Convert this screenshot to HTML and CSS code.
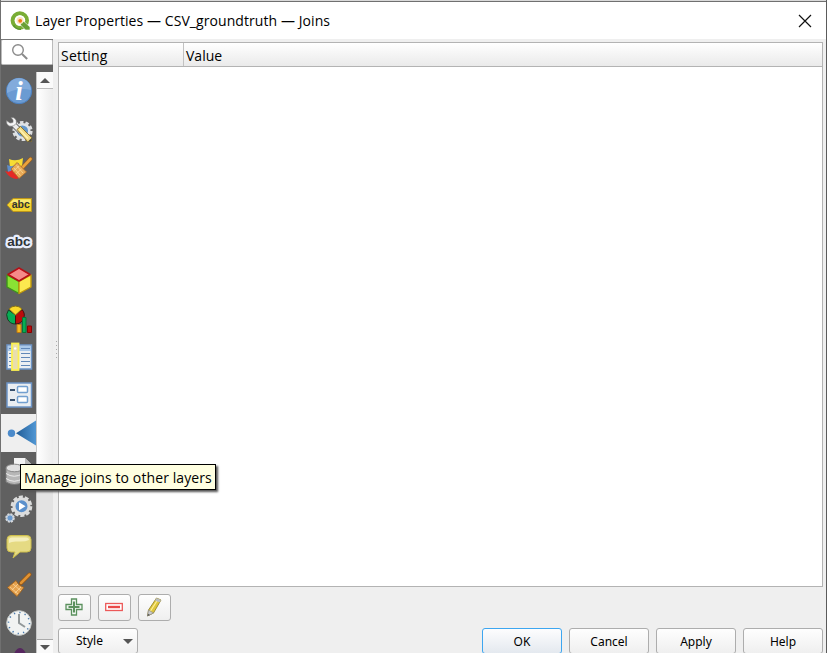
FILE: index.html
```html
<!DOCTYPE html>
<html lang="en">
<head>
<meta charset="utf-8">
<title>Layer Properties — CSV_groundtruth — Joins</title>
<link rel="stylesheet" href="styles.css">
</head>
<body>
<div class="window">
  <header class="titlebar">
    <svg class="logo" width="20" height="20" viewBox="0 0 20 20"><circle cx="9.800" cy="9.500" r="7.200" fill="none" stroke="#79ad35" stroke-width="4"/><path d="M3.500 14A8 8 0 0 0 11 18.300" fill="none" stroke="#589632" stroke-width="1.500"/><circle cx="10" cy="9.500" r="5.200" fill="#fff"/><path d="M10.500 10.500H14L20 16V19H15.500L10.500 14Z" fill="#689f35" stroke="#fff" stroke-width=".6"/><circle cx="10" cy="9.500" r="3.500" fill="#fce3bd"/><circle cx="10.200" cy="9.800" r="1.900" fill="#ee7913"/></svg>
    <h1 class="title">Layer Properties — CSV_groundtruth — Joins</h1>
    <svg class="close" width="14" height="14" viewBox="0 0 14 14"><path d="M1 1L13 13M13 1L1 13" stroke="#111" stroke-width="1.200"/></svg>
  </header>
  <div class="body">
    <aside class="sidebar">
      <div class="search"><svg width="18" height="18" viewBox="0 0 18 18" fill="none" stroke="#8b8b8b"><circle cx="7" cy="7" r="5.300" stroke-width="1.400"/><path d="M11 11L16.200 16" stroke-width="2"/></svg></div>
      <div class="side-main">
        <nav class="icons">
          <svg class="row" viewBox="0 0 36 38"><circle cx="18" cy="19" r="12.700" fill="#6b9bd2" stroke="#4b80c0"/><path d="M6 18A12 12 0 0 1 30 18Q18 15 6 21Z" fill="#82abdc"/><text x="18" y="27.500" class="info">i</text></svg>
          <svg class="row" viewBox="0 0 36 38"><circle cx="21.500" cy="21" r="8.600" fill="none" stroke="#dcdee0" stroke-width="3" stroke-dasharray="3.400 2"/><circle cx="21.500" cy="21" r="6.800" fill="#6598cc" stroke="#dfe3e6" stroke-width="2.500"/><path d="M12 14L20 22" stroke="#606060" stroke-width="6"/><path d="M11 13L20 22" stroke="#ececec" stroke-width="4"/><path d="M10 7.500Q15.500 7 15.500 13Q13 17 8 16Q5 14 5.500 10.500L9 13L12 12.500L12 10Z" fill="#f6f6f6" stroke="#777" stroke-width=".6"/><path d="M16 19.500L19.500 16.500L30.500 27.500V31.500H26.500Z" fill="#f0da84" stroke="#8d762f"/><path d="M18.500 19.500L27 28.500" stroke="#fff3b0" stroke-width="1.500"/><path d="M27 31.500L30.500 28V31.500Z" fill="#444"/></svg>
          <svg class="row" viewBox="0 0 36 38"><path d="M8 11Q15 14 22 10L21 19L9 19Z" fill="#f7dc34"/><path d="M6 17Q12 20 18 15L17 24L7 24Z" fill="#5e8dca"/><path d="M4 23Q9 25 12 21L19 29L16 31Q9 31 4 23Z" fill="#e52a26"/><path d="M21 20L29.500 11" stroke="#9e5d16" stroke-width="4" stroke-linecap="round"/><path d="M21 20L29.500 11" stroke="#e9a33e" stroke-width="2.600" stroke-linecap="round"/><path d="M16 14.500L25.500 24L18 30.500L10 21Z" fill="#e8aa58" stroke="#a96a25" stroke-width=".8"/><path d="M13 20L19.500 27.500M15.500 17.500L22 25M12.500 23L18 18M15 26L20.500 21" stroke="#fbdc99" stroke-width=".8"/></svg>
          <svg class="row" viewBox="0 0 36 38"><path d="M6 19L12 12.500H30.500V25.500H12Z" fill="#f2d331" stroke="#bd961a"/><path d="M9 17L12.500 13.500H29.500V17Z" fill="#faea72"/><text x="19.800" y="22" class="tag">abc</text></svg>
          <svg class="row" viewBox="0 0 36 38"><text x="18" y="22.300" class="halo">abc</text></svg>
          <svg class="row" viewBox="0 0 36 38" stroke-linejoin="round"><path d="M6 13L18 19.500V31.500L6 25Z" fill="#8ae234" stroke="#3d951b" stroke-width="1.400"/><path d="M18 19.500L30 13V25L18 31.500Z" fill="#fce94f" stroke="#c29a0a" stroke-width="1.400"/><path d="M18 6L29 12.500L18 19L7 12.500Z" fill="#f58a8a" stroke="#b50f16" stroke-width="1.500"/></svg>
          <svg class="row" viewBox="0 0 36 38"><path d="M14.500 15V24A8.700 8.700 0 0 1 7.500 10Z" fill="#06ad55" stroke="#173f24"/><path d="M14.500 15L21 9.500A8.700 8.700 0 0 1 14.500 24Z" fill="#bb0c0c" stroke="#441010"/><path d="M14.500 15L8 9A8.700 8.700 0 0 1 21 9Z" fill="#fbd92b" stroke="#8a7418"/><path d="M16 24.500H20V32.500H16Z" fill="#f6bb22" stroke="#c07a11"/><path d="M21.500 17.500H25V32.500H21.500Z" fill="#06ad55" stroke="#087338"/><path d="M26.500 26H30.500V32.500H26.500Z" fill="#bb0c0c" stroke="#800"/></svg>
          <svg class="row" viewBox="0 0 36 38"><rect x="6" y="7" width="24.500" height="24" fill="#eceff2" stroke="#6c94c6" stroke-width="1.500"/><path d="M7 8H30V13H7Z" fill="#aac8e8"/><path d="M8 10.500H29M8 15.500H29M8 19.500H29M8 23.500H29M8 27.500H29" stroke="#6288b8" stroke-width="1.100" stroke-dasharray="10 2"/><rect x="11" y="5.500" width="6.500" height="26.500" fill="#e9dfac" stroke="#fcf151" stroke-width="1.800"/><circle cx="14.200" cy="10.500" r="1.300" fill="#fff"/></svg>
          <svg class="row" viewBox="0 0 36 38"><rect x="6" y="7" width="24.500" height="24" fill="#e9edf1" stroke="#6c94c6" stroke-width="1.500"/><g fill="#fff" stroke="#729fcf" stroke-width="1.500"><rect x="16.500" y="10.500" width="10" height="6" rx="1"/><rect x="16.500" y="20.500" width="10" height="6" rx="1"/></g><path d="M9 14H14M9 24H14" stroke="#38506d" stroke-width="2"/></svg>
          <svg class="row active" viewBox="0 0 36 38"><defs><linearGradient id="j"><stop stop-color="#205c96"/><stop offset="1" stop-color="#5197d4"/></linearGradient></defs><circle cx="10.500" cy="19.200" r="3.700" fill="#4b8aca"/><path d="M15 19.200L35 6.500V31.500Z" fill="url(#j)"/></svg>
          <svg class="row" viewBox="0 0 36 38"><path d="M13 6H24L30 12V30H13Z" fill="#f4f4f4"/><path d="M24 6V12H30" fill="#bbb"/><path d="M5 16V30Q13 35 22 30V16Z" fill="#b7b7b7" stroke="#777"/><ellipse cx="13.500" cy="16" rx="8.500" ry="3.800" fill="#e0e0e0" stroke="#888"/><path d="M5 21.500Q13 27 22 21.500M5 26.500Q13 32 22 26.500" fill="none" stroke="#eee"/></svg>
          <svg class="row" viewBox="0 0 36 38"><circle cx="20.500" cy="16.300" r="9.300" fill="none" stroke="#dcdddd" stroke-width="3" stroke-dasharray="4 1.843"/><circle cx="20.500" cy="16.300" r="7.500" fill="#5a90cc" stroke="#dcdddd" stroke-width="3"/><path d="M18 12.300L24.500 16.300L18 20.300Z" fill="#fff"/><circle cx="9" cy="28" r="3.800" fill="#699ad0" stroke="#d7dadd" stroke-width="2" stroke-dasharray="2 .98"/><circle cx="9" cy="28" r="3.200" fill="#699ad0" stroke="#d7dadd"/></svg>
          <svg class="row" viewBox="0 0 36 38"><path d="M10 7.500H26Q30 7.500 30 11.500V20Q30 24 26 24H19L12 30L14 24H10Q6 24 6 20V11.500Q6 7.500 10 7.500Z" fill="#e5da83" stroke="#cdbe4b"/><path d="M8 15V12Q8 9.500 11 9.500H25Q28 9.500 28 12Q24 14 17 13.500Q11 13 8 15Z" fill="#f5efbd"/></svg>
          <svg class="row" viewBox="0 0 36 38"><path d="M20 17L28.500 8.500" stroke="#945414" stroke-width="4" stroke-linecap="round"/><path d="M20 17L28.500 8.500" stroke="#df9334" stroke-width="2.500" stroke-linecap="round"/><path d="M15 14.500Q17 19.500 23 21.500L16 30.500L6.500 21.500Z" fill="#e5a14e" stroke="#9c5d18" stroke-width=".8"/><path d="M12 18L20 25M9 21L17 28M11 24L17 18M14 27L20 21" stroke="#fbd59a" stroke-width=".8"/></svg>
          <svg class="row" viewBox="0 0 36 38"><circle cx="18" cy="19" r="12.300" fill="#f1f3f2" stroke="#c6cac8"/><circle cx="18" cy="19" r="10.500" fill="none" stroke="#4979ac" stroke-width="1.500" stroke-dasharray="1.300 4.198"/><path d="M18 10V19L24 23" fill="none" stroke="#929899" stroke-width="2"/></svg>
          <svg class="row" viewBox="0 0 36 38"><ellipse cx="19" cy="19" rx="7" ry="13" fill="#56265f"/></svg>
        </nav>
        <div class="scroll"><div class="arrow"><i class="up"></i></div><div class="thumb"></div><div class="arrow last"><i class="down"></i></div></div>
      </div>
    </aside>
    <div class="splitter"><i></i><i></i><i></i><i></i><i></i></div>
    <main class="content">
      <div class="tree"><div class="tree-head"><div class="setting"><span>Setting</span></div><div class="value"><span>Value</span></div></div></div>
      <div class="tools">
        <button class="btn tool"><svg width="18" height="18" viewBox="0 0 18 18"><path d="M6.500 1H11.500V6.500H17V11.500H11.500V17H6.500V11.500H1V6.500H6.500Z" fill="#f3f7f3" stroke="#5b915e" stroke-width="1.300"/><path d="M9 3.500V14.500M3.500 9H14.500" stroke="#5b915e" stroke-width="2"/></svg></button>
        <button class="btn tool"><svg width="18" height="18" viewBox="0 0 18 18"><rect x=".7" y="5.500" width="16.600" height="7" fill="#fff" stroke="#ec5959" stroke-width="1.300"/><path d="M3 9H15" stroke="#e94949" stroke-width="2.400"/></svg></button>
        <button class="btn tool"><svg width="18" height="20" viewBox="0 0 18 20"><path d="M11.500 1L16 3L8.500 16L2.500 19L3.500 13Z" fill="#dfc73c" stroke="#8e7c26" stroke-width=".8"/><path d="M5.500 14L12.500 3" stroke="#fff09b" stroke-width="1.200"/><path d="M11.500 1L16 3L14.500 5.500L10 3.500Z" fill="#b9bdc0"/><path d="M3.500 13L8.500 16L2.500 19Z" fill="#c9c9cc" stroke="#888" stroke-width=".6"/><path d="M2.500 19L3 16.800L5 18Z" fill="#555"/></svg></button>
      </div>
      <div class="actions">
        <button class="btn style"><span>Style</span><i class="down"></i></button>
        <button class="btn ok">OK</button><button class="btn">Cancel</button><button class="btn">Apply</button><button class="btn">Help</button>
      </div>
    </main>
  </div>
  <div class="tooltip"><span>Manage joins to other layers</span></div>
</div>
</body>
</html>
```

FILE: styles.css
```css
* { box-sizing: border-box; }
body { margin: 0; overflow: hidden; background: #d9d9d9; font-family: "Open Sans", "Noto Sans", sans-serif; color: #000; }
svg { display: block; flex: none; }
.window { position: relative; height: 653px; padding-top: 1px; display: flex; flex-direction: column; }
.window { border-left: 1px solid #707070; border-right: 1px solid #5b5b5b; }
.titlebar { height: 38px; flex: none; background: #fff; border-top: 1px solid #707070; display: flex; align-items: center; padding: 0 14px 0 9px; }
.title { margin: 0 0 0 5px; font-size: 14px; font-weight: 400; letter-spacing: .075px; white-space: nowrap; }
.close { margin-left: auto; }
.body { flex: 1; min-height: 0; display: flex; background: #efefef; }
.sidebar { width: 52px; flex: none; display: flex; flex-direction: column; background: #606060; }
.search { height: 26px; flex: none; background: #fff; border: 1px solid #bbb; border-top-color: #777; border-radius: 2px; padding: 3px 0 0 9px; }
.side-main { flex: 1; min-height: 0; display: flex; padding-top: 7px; }
.icons { width: 35px; overflow: hidden; }
.row { width: 36px; height: 38px; }
.active { background: #efefef; }
.info { font: italic bold 27px "Liberation Serif", serif; fill: #fff; text-anchor: middle; }
.tag { font: bold 10.500px "Liberation Sans", sans-serif; fill: #333; text-anchor: middle; }
.halo { font: bold 13.500px "Liberation Sans", sans-serif; fill: #2e3436; stroke: #e8edfb; stroke-width: 4.500px; stroke-linejoin: round; paint-order: stroke; text-anchor: middle; }
.scroll { width: 17px; display: flex; flex-direction: column; background: #e3e3e3; border-left: 1px solid #c7c7c7; }
.arrow { height: 17px; flex: none; display: flex; align-items: center; justify-content: center; background: #fafafa; border-bottom: 1px solid #bbb; }
.arrow.last { height: 14px; margin-top: auto; border-top: 1px solid #aaa; border-bottom: 0; padding-top: 2px; }
.thumb { height: 376px; background: linear-gradient(90deg, #fff, #ececec); border-bottom: 1px solid #bbb; }
.up, .down { border: 5px solid transparent; border-top-width: 0; border-bottom: 5px solid #555; }
.down { border-top: 5px solid #555; border-bottom: 0; }
.splitter { width: 5px; flex: none; display: flex; flex-direction: column; align-items: flex-end; gap: 3px; padding: 302px 1px 0 0; }
.splitter i { width: 1px; height: 1px; background: #aaa; }
.content { flex: 1; display: flex; flex-direction: column; padding: 3px 3px 0 0; }
.tree { height: 545px; flex: none; background: #fff; border: 1px solid #b3b3b3; }
.tree-head { height: 24px; display: flex; background: linear-gradient(#fff, #eaeaea); border-bottom: 1px solid #b3b3b3; font-size: 14px; line-height: 25px; }
.setting { width: 125px; padding-left: 2px; border-right: 1px solid #c2c2c2; letter-spacing: .2px; }
.value { padding-left: 2px; }
.tools { display: flex; gap: 7px; margin-top: 7px; }
.btn { width: 80px; height: 26px; flex: none; padding: 0; border: 1px solid #adadad; border-radius: 3px; background: linear-gradient(#fefefe, #efefef); font: 12px/26px "Noto Sans", sans-serif; color: #000; }
.tool { width: 33px; height: 27px; display: flex; align-items: center; justify-content: center; padding: 0 2px 2px 0; }
.actions { display: flex; gap: 7px; margin-top: 7px; }
.style { margin-right: auto; display: flex; align-items: center; justify-content: space-between; padding: 0 4px 0 17px; }
.ok { border-color: #3da6f0; background: linear-gradient(#fdfdfe, #e4e9ef); }
.tooltip { position: absolute; left: 19px; top: 464px; width: 196px; height: 26px; padding-left: 3px; background: #ffffe1; border: 1px solid #000; box-shadow: 2px 2px 2px #555; font-size: 14px; line-height: 26px; letter-spacing: .1px; white-space: nowrap; }
```
